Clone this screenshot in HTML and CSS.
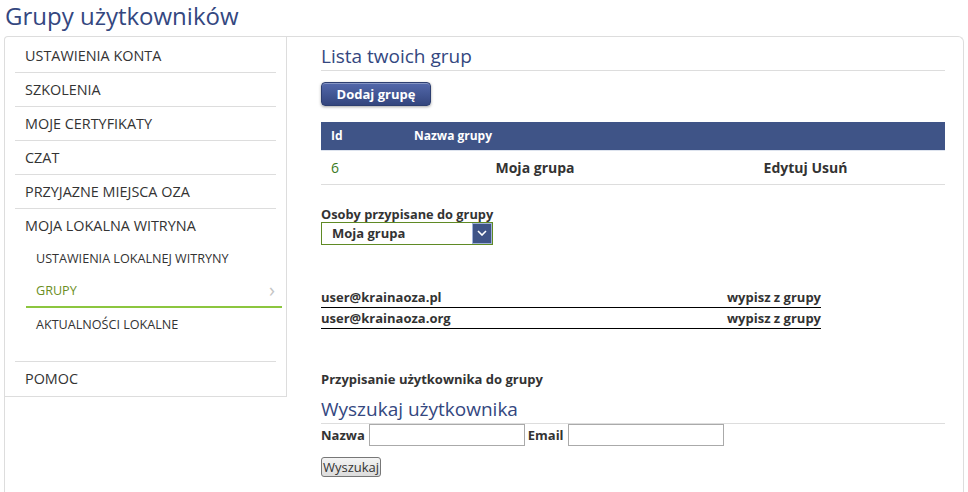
FILE: index.html
```html
<!DOCTYPE html>
<html lang="pl">
<head>
    <meta charset="UTF-8">
    <title>Grupy użytkowników</title>
    <link rel="stylesheet" href="styles.css">
</head>
<body>

    <h1 class="page-title">Grupy użytkowników</h1>

    <div class="panel">
        <div class="sidebar">
            <ul class="menu">
                <li class="menu-item">Ustawienia konta</li>
                <li class="menu-item">Szkolenia</li>
                <li class="menu-item">Moje certyfikaty</li>
                <li class="menu-item">Czat</li>
                <li class="menu-item">Przyjazne miejsca OZA</li>
                <li class="menu-item has-sub">
                    <span class="menu-label">Moja lokalna witryna</span>
                    <ul class="submenu">
                        <li class="sub-item">Ustawienia lokalnej witryny</li>
                        <li class="sub-item active">Grupy <span class="chevron">&#x203A;</span></li>
                        <li class="sub-item">Aktualności lokalne</li>
                    </ul>
                </li>
                <li class="menu-item last">Pomoc</li>
            </ul>
        </div>

        <div class="content">
            <h2 class="section-title">Lista twoich grup</h2>
            <button class="btn-add">Dodaj grupę</button>

            <table class="groups">
                <thead>
                    <tr>
                        <th class="col-id">Id</th>
                        <th class="col-name">Nazwa grupy</th>
                        <th class="col-actions"></th>
                    </tr>
                </thead>
                <tbody>
                    <tr>
                        <td class="cell-id">6</td>
                        <td class="cell-name">Moja grupa</td>
                        <td class="cell-actions">Edytuj Usuń</td>
                    </tr>
                </tbody>
            </table>

            <div class="assigned">
                <label class="small-label">Osoby przypisane do grupy</label>
                <div class="select">
                    <span class="select-value">Moja grupa</span>
                    <span class="select-arrow">
                        <svg width="10" height="6" viewBox="0 0 10 6"><path d="M1 1 L5 5 L9 1" fill="none" stroke="#fff" stroke-width="1.6"/></svg>
                    </span>
                </div>
            </div>

            <ul class="members">
                <li class="member"><span>user@krainaoza.pl</span><span>wypisz z grupy</span></li>
                <li class="member"><span>user@krainaoza.org</span><span>wypisz z grupy</span></li>
            </ul>

            <p class="small-label assign-title">Przypisanie użytkownika do grupy</p>
            <h2 class="section-title search-title">Wyszukaj użytkownika</h2>

            <div class="search-row">
                <label class="small-label">Nazwa</label>
                <input type="text" class="field">
                <label class="small-label label-email">Email</label>
                <input type="text" class="field">
            </div>
            <button class="btn-search">Wyszukaj</button>
        </div>
    </div>

</body>
</html>
```

FILE: styles.css
```css
* {
    margin: 0;
    padding: 0;
    box-sizing: border-box;
}

body {
    font-family: "Open Sans", Arial, sans-serif;
    color: #333;
    background-color: #fff;
    height: 492px;
    overflow: hidden;
}

.page-title {
    font-size: 24px;
    font-weight: 400;
    line-height: 32px;
    color: #34477f;
    margin: 0 0 4px 5px;
}

.panel {
    margin-left: 4px;
    width: 960px;
    height: 480px;
    border: 1px solid #ddd;
    border-bottom: none;
    border-radius: 4px 6px 0 0;
    display: flex;
    align-items: flex-start;
}

/* sidebar */
.sidebar {
    width: 282px;
    border-right: 1px solid #ddd;
    border-bottom: 1px solid #ddd;
    padding: 2px 10px 1px 10px;
}

.menu {
    list-style: none;
}

.menu-item {
    font-size: 14.4px;
    line-height: 33px;
    text-transform: uppercase;
    padding-left: 10px;
    border-bottom: 1px solid #ddd;
}

.menu-item.last {
    border-bottom: none;
}

.menu-label {
    display: block;
}

.submenu {
    list-style: none;
    margin: 0 -6px 20px 1px;
}

.sub-item {
    font-size: 12.6px;
    line-height: 33px;
    padding-left: 10px;
    position: relative;
}

.sub-item.active {
    color: #6b8e23;
    line-height: 31px;
    border-bottom: 2px solid #8cc63f;
}

.chevron {
    position: absolute;
    right: 7px;
    top: -1px;
    color: #c4c4c4;
    font-size: 20px;
}

/* content */
.content {
    flex: 1;
    padding: 5px 18px 0 34px;
}

.section-title {
    font-size: 19px;
    font-weight: 400;
    line-height: 28px;
    color: #34477f;
    border-bottom: 1px solid #ddd;
}

.btn-add {
    display: block;
    margin-top: 11px;
    width: 110px;
    height: 24px;
    font-family: inherit;
    font-size: 13px;
    font-weight: 700;
    color: #fff;
    border: 1px solid #2d3e70;
    border-radius: 4px;
    background: linear-gradient(#5368ab, #34467e);
    box-shadow: 0 1px 3px rgba(0, 0, 0, 0.35), inset 0 1px 0 rgba(255, 255, 255, 0.3);
}

.groups {
    width: 100%;
    margin-top: 16px;
    border-collapse: collapse;
    font-size: 13px;
}

.groups th {
    background-color: #3f5487;
    color: #fff;
    font-size: 12px;
    font-weight: 700;
    text-align: left;
    height: 28px;
    padding: 0 10px;
    border-bottom: 1px solid #dde3ee;
}

.col-id {
    width: 83px;
}

.col-name {
    width: 262px;
}

.groups td {
    height: 34px;
    padding: 0 10px;
    border-bottom: 1px solid #ddd;
    font-weight: 700;
    text-align: center;
    font-size: 14px;
}

.groups td.cell-id {
    text-align: left;
    font-weight: 400;
    color: #3b7a1e;
}

.small-label {
    font-size: 13px;
    font-weight: 700;
}

.assigned {
    margin-top: 21px;
}

.assigned .small-label {
    display: block;
    line-height: 16px;
    font-size: 12.8px;
}

.select {
    width: 172px;
    height: 23px;
    border: 1px solid #5f8a24;
    display: flex;
    align-items: center;
    justify-content: space-between;
    font-size: 13px;
    font-weight: 700;
    padding-left: 10px;
}

.select-arrow {
    width: 20px;
    height: 21px;
    background-color: #3f5487;
    border: 1px solid #9fb0d8;
    display: flex;
    align-items: center;
    justify-content: center;
}

.members {
    list-style: none;
    width: 500px;
    margin-top: 42px;
}

.member {
    display: flex;
    justify-content: space-between;
    font-size: 13px;
    font-weight: 700;
    line-height: 20px;
    border-bottom: 1px solid #000;
}

.assign-title {
    margin-top: 42px;
    line-height: 16px;
}

.search-title {
    margin-top: 8px;
}

.search-row {
    display: flex;
    align-items: center;
    gap: 4px;
}

.label-email {
    margin-left: -1px;
}

.field {
    width: 156px;
    height: 22px;
    border: 1px solid #aaa;
    font-family: inherit;
}

.btn-search {
    margin-top: 11px;
    height: 20px;
    padding: 0 1px;
    font-family: inherit;
    font-size: 13px;
    color: #333;
    background: linear-gradient(#f4f4f4, #dcdcdc);
    border: 1px solid #777;
    border-radius: 3px;
}
```
